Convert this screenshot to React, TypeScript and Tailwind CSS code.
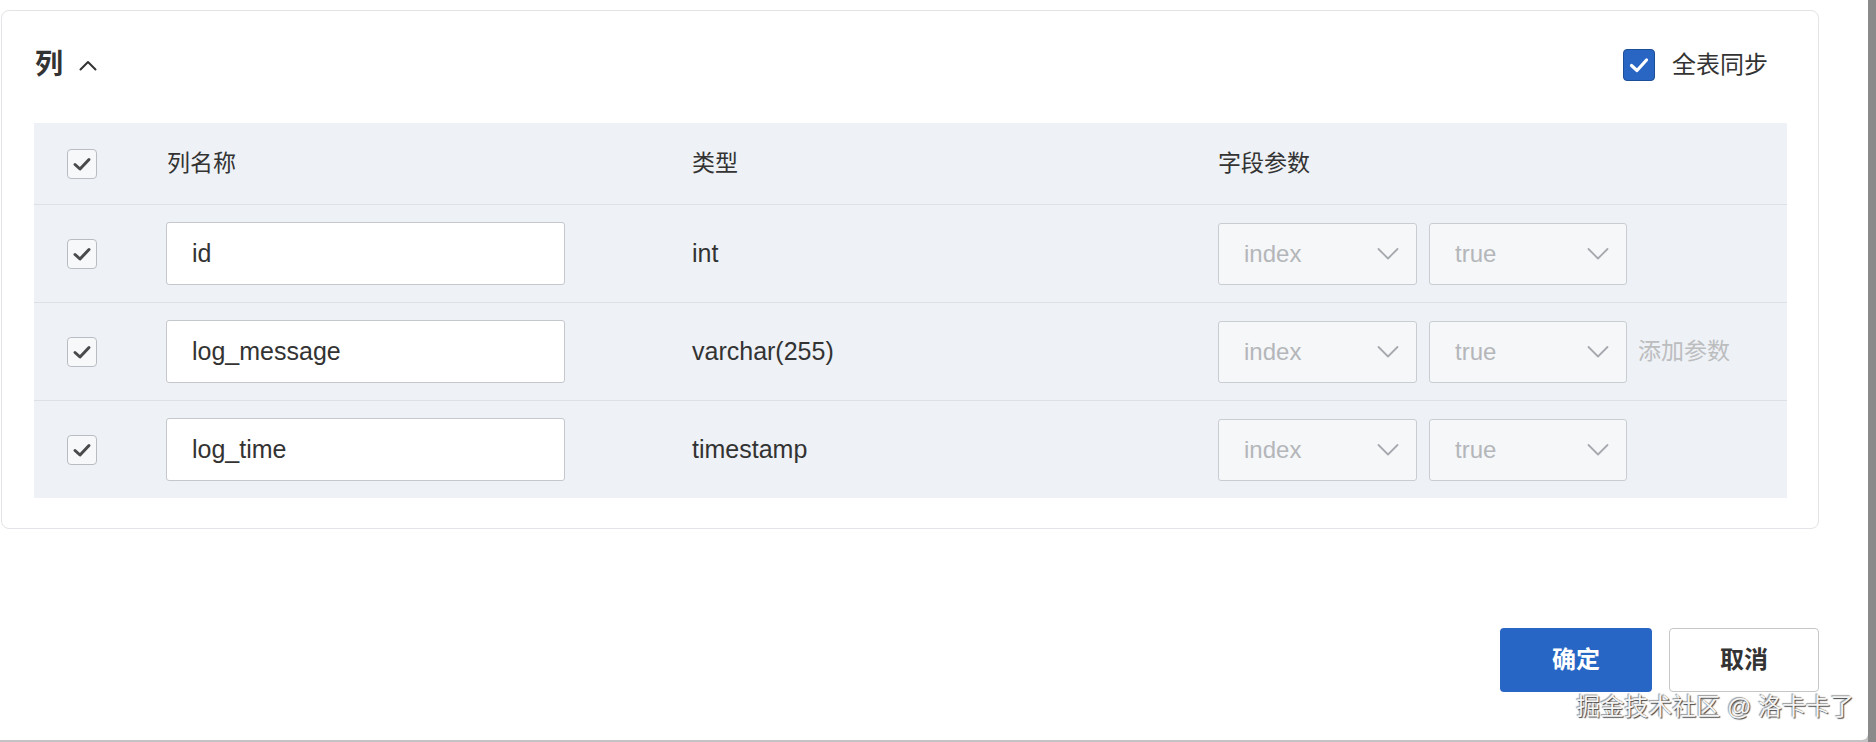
import React from "react";

const FONT = "font-['Liberation_Sans','Noto_Sans_CJK_SC',sans-serif]";

function GrayCheck() {
  return (
    <div className="w-[30px] h-[30px] rounded-[4px] border-[1.5px] border-[#b9bdc3] bg-[#f7f8fa] flex items-center justify-center">
      <svg width="20" height="16" viewBox="0 0 20 16" fill="none">
        <path d="M3 8.5 L8 13 L17 3.5" stroke="#4a4a4a" strokeWidth="3" strokeLinecap="round" strokeLinejoin="round" />
      </svg>
    </div>
  );
}

function BlueCheck() {
  return (
    <div className="w-[32px] h-[32px] rounded-[4px] border-[1.5px] border-[#1d4e98] bg-[#2966c4] flex items-center justify-center">
      <svg width="22" height="18" viewBox="0 0 22 18" fill="none">
        <path d="M3.5 9.5 L9 14.5 L18.5 4" stroke="#ffffff" strokeWidth="3.2" strokeLinecap="round" strokeLinejoin="round" />
      </svg>
    </div>
  );
}

function Chevron() {
  return (
    <svg width="22" height="14" viewBox="0 0 22 14" fill="none">
      <path d="M1.5 2 L11 11.5 L20.5 2" stroke="#a6a9ad" strokeWidth="1.8" strokeLinecap="round" strokeLinejoin="round" />
    </svg>
  );
}

function Select({ value, w }: { value: string; w: string }) {
  return (
    <div className={`${w} h-[62px] rounded-[3px] border-[1.5px] border-[#c9cdd2] bg-[#f5f7f9] flex items-center justify-between pl-[25px] pr-[17px]`}>
      <span className="text-[24px] text-[#b4b6b9]">{value}</span>
      <Chevron />
    </div>
  );
}

const rows = [
  { name: "id", type: "int", add: false },
  { name: "log_message", type: "varchar(255)", add: true },
  { name: "log_time", type: "timestamp", add: false },
];

export default function App() {
  return (
    <div className={`${FONT} w-[1876px] h-[742px] flex bg-[#8a8a8a]`}>
      <div className="w-[1868px] h-[742px] flex flex-col bg-[#c3c3c3]">
        <div className="relative w-[1868px] h-[740px] bg-white rounded-br-[6px] pt-[10px] pl-[1px]">
          <div className="w-[1818px] h-[519px] rounded-[8px] border border-[#e2e4e7] pt-[30px] pl-[32px] pr-[31px]">
            <div className="h-[48px] flex items-center justify-between pr-[19px]">
              <div className="flex items-center gap-[16px] pl-[1px]">
                <span className="text-[28px] font-bold text-[#333]">列</span>
                <svg width="18" height="11" viewBox="0 0 18 11" fill="none" className="mt-[1px]">
                  <path d="M1.5 9.5 L9 2 L16.5 9.5" stroke="#333" strokeWidth="2" strokeLinecap="round" strokeLinejoin="round" />
                </svg>
              </div>
              <div className="flex items-center gap-[17px]">
                <BlueCheck />
                <span className="text-[24px] text-[#333]">全表同步</span>
              </div>
            </div>
            <div className="mt-[34px] bg-[#eef1f5]">
              <div className="h-[81px] grid grid-cols-[132px_526px_526px_1fr] items-center text-[23px] text-[#333]">
                <div className="pl-[33px]"><GrayCheck /></div>
                <div className="pl-[1px]">列名称</div>
                <div>类型</div>
                <div>字段参数</div>
              </div>
              {rows.map((r) => (
                <div key={r.name} className="h-[98px] border-t border-[#dde1e7] grid grid-cols-[132px_526px_526px_1fr] items-center text-[25px] text-[#333]">
                  <div className="pl-[33px]"><GrayCheck /></div>
                  <div>
                    <div className="w-[399px] h-[63px] rounded-[3px] border-[1.5px] border-[#c4c7cc] bg-white flex items-center pl-[25px]">
                      {r.name}
                    </div>
                  </div>
                  <div>{r.type}</div>
                  <div className="flex items-center">
                    <Select value="index" w="w-[199px]" />
                    <div className="ml-[12px]"><Select value="true" w="w-[198px]" /></div>
                    {r.add && <span className="ml-[11px] text-[23px] text-[#bcbdbf]">添加参数</span>}
                  </div>
                </div>
              ))}
            </div>
          </div>
          <div className="w-[1818px] mt-[99px] flex justify-end gap-[17px]">
            <button className="w-[152px] h-[64px] rounded-[4px] bg-[#2766c4] text-white text-[24px] font-bold">确定</button>
            <button className="w-[150px] h-[64px] rounded-[4px] border-[1.5px] border-[#c6c6c6] bg-white text-[#333] text-[24px] font-bold">取消</button>
          </div>
          <div className="absolute right-[14px] top-[689px] whitespace-nowrap text-[24px] text-[#f4f4f4] [text-shadow:1px_1px_1px_#444,-1px_-1px_1px_#999]">
            掘金技术社区 @ 洛卡卡了
          </div>
        </div>
      </div>
    </div>
  );
}
